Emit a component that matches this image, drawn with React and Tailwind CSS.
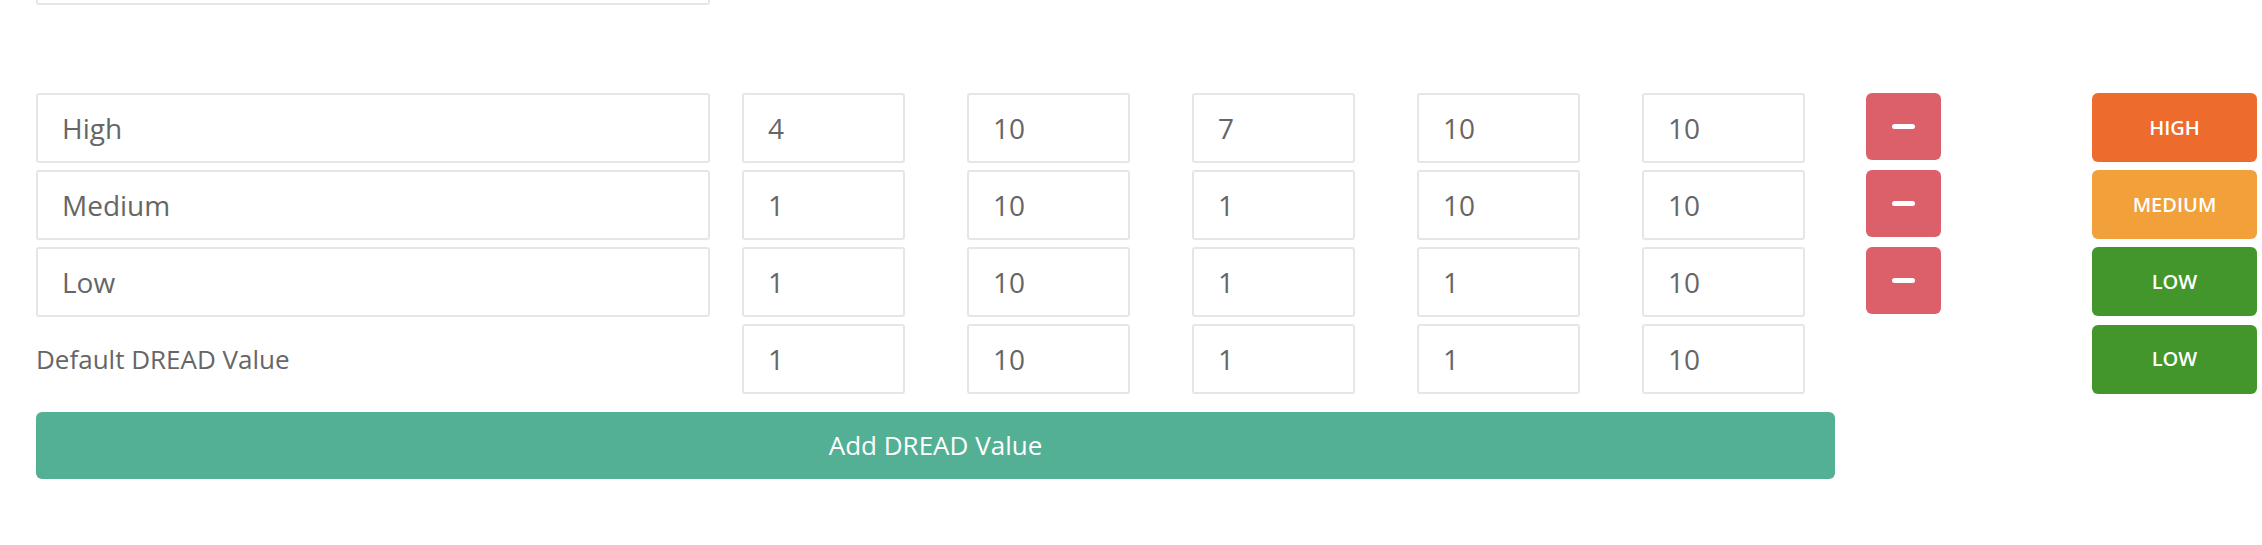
const rows = [
  { name: 'High', values: [4, 10, 7, 10, 10], level: 'HIGH' },
  { name: 'Medium', values: [1, 10, 1, 10, 10], level: 'MEDIUM' },
  { name: 'Low', values: [1, 10, 1, 1, 10], level: 'LOW' },
];

const defaults = [1, 10, 1, 1, 10];

const badgeStyle = {
  HIGH: 'bg-[#ee6b2e]',
  MEDIUM: 'bg-[#f1a03a]',
  LOW: 'bg-[#43962b]',
};

function Field({ value, wide }) {
  return (
    <div
      className={`h-[70px] flex items-center border-2 border-[#e6e6e6] rounded-[3px] bg-white px-[24px] text-[28px] text-[#666] ${
        wide ? 'w-[674px]' : 'w-[163px]'
      }`}
    >
      {value}
    </div>
  );
}

function Badge({ level }) {
  return (
    <div
      className={`w-[165px] h-[69px] rounded-[6px] flex items-center justify-center text-white text-[20px] font-semibold ${badgeStyle[level]}`}
    >
      {level}
    </div>
  );
}

function Cell({ children }) {
  return <div className="w-[225px] shrink-0">{children}</div>;
}

export default function App() {
  return (
    <div className="w-[2262px] h-[545px] bg-white overflow-hidden font-['Open_Sans',sans-serif]">
      <div className="ml-[36px] w-[674px] h-[5px] border-2 border-t-0 border-[#e6e6e6] rounded-b-[3px]" />

      <div className="mt-[88px] pl-[36px] flex flex-col gap-[7px]">
        {rows.map((row) => (
          <div key={row.name} className="flex items-start">
            <div className="w-[706px] shrink-0">
              <Field value={row.name} wide />
            </div>
            {row.values.map((v, i) => (
              <Cell key={i}>
                <Field value={v} />
              </Cell>
            ))}
            <div className="w-[225px] shrink-0">
              <button className="w-[75px] h-[67px] -ml-px rounded-[6px] bg-[#dc6069] flex items-center justify-center">
                <span className="block w-[23px] h-[5px] rounded-full bg-white" />
              </button>
            </div>
            <Badge level={row.level} />
          </div>
        ))}

        <div className="flex items-center">
          <div className="w-[706px] shrink-0 text-[26px] text-[#666]">Default DREAD Value</div>
          {defaults.map((v, i) => (
            <Cell key={i}>
              <Field value={v} />
            </Cell>
          ))}
          <div className="w-[225px] shrink-0" />
          <Badge level="LOW" />
        </div>
      </div>

      <button className="mt-[18px] ml-[36px] w-[1799px] h-[67px] rounded-[6px] bg-[#53b094] text-white text-[26px]">
        Add DREAD Value
      </button>
    </div>
  );
}
